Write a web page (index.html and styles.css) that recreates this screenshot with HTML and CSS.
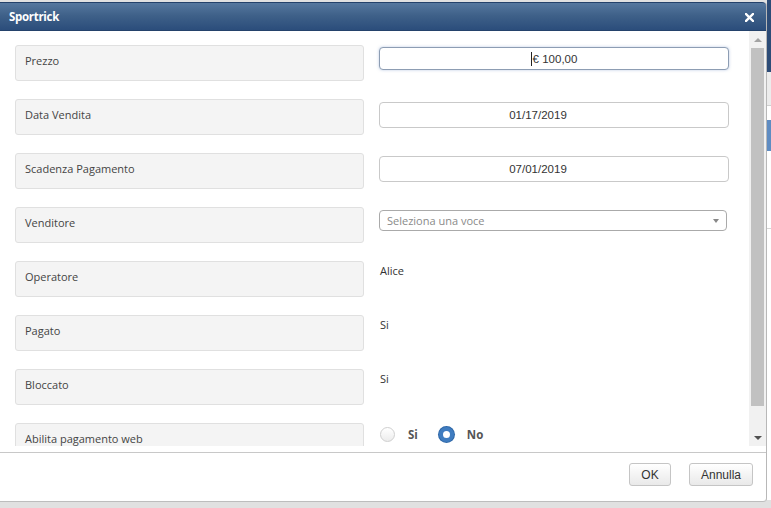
FILE: index.html
```html
<!DOCTYPE html>
<html>
<head>
  <title>Sportrick</title>
  <meta name="viewport" content="width=device-width, initial-scale=1.0">
  <link rel="stylesheet" href="styles.css">
</head>
<body>
  <div class="screen">
    <div class="dialog">
      <div class="titlebar">
        <span class="title">Sportrick</span>
        <span class="close" title="Chiudi">
          <svg width="9" height="9" viewBox="0 0 9 9"><path d="M1 1 L8 8 M8 1 L1 8" stroke="#fff" stroke-width="2.4" stroke-linecap="square"/></svg>
        </span>
      </div>

      <div class="content">
        <div class="scroll">
          <div class="form">
            <div class="row">
              <div class="label">Prezzo</div>
              <div class="field"><div class="input focused"><span class="caret"></span>€ 100,00</div></div>
            </div>
            <div class="row">
              <div class="label">Data Vendita</div>
              <div class="field"><div class="input date">01/17/2019</div></div>
            </div>
            <div class="row">
              <div class="label">Scadenza Pagamento</div>
              <div class="field"><div class="input date">07/01/2019</div></div>
            </div>
            <div class="row">
              <div class="label">Venditore</div>
              <div class="field">
                <div class="select"><span class="placeholder">Seleziona una voce</span><span class="select-arrow"></span></div>
              </div>
            </div>
            <div class="row">
              <div class="label">Operatore</div>
              <div class="field"><div class="value">Alice</div></div>
            </div>
            <div class="row">
              <div class="label">Pagato</div>
              <div class="field"><div class="value">Si</div></div>
            </div>
            <div class="row">
              <div class="label">Bloccato</div>
              <div class="field"><div class="value">Si</div></div>
            </div>
            <div class="row">
              <div class="label">Abilita pagamento web</div>
              <div class="field">
                <div class="radios">
                  <span class="radio"></span><span class="radio-text">Si</span>
                  <span class="radio checked"></span><span class="radio-text">No</span>
                </div>
              </div>
            </div>
          </div>
        </div>
        <div class="scrollbar">
          <div class="sb-arrow up"></div>
          <div class="sb-track"><div class="sb-thumb"></div></div>
          <div class="sb-arrow down"></div>
        </div>
      </div>

      <div class="footer">
        <button class="btn btn-ok">OK</button>
        <button class="btn">Annulla</button>
      </div>
    </div>
    <div class="page-edge"></div>
  </div>
</body>
</html>
```

FILE: styles.css
```css
* {
  margin: 0;
  padding: 0;
  box-sizing: border-box;
}

body {
  font-family: 'Open Sans', 'DejaVu Sans', sans-serif;
  background: #e1e1e1;
  color: #333;
  overflow: hidden;
}

.screen {
  display: flex;
  height: 508px;
}

.page-edge {
  flex: 1;
  height: 500px;
  background: linear-gradient(to bottom,
    #2d4c77 0, #2d4c77 72px,
    #ececec 72px, #ececec 105px,
    #d0d0d0 105px, #d0d0d0 106px,
    #fff 106px, #fff 120px,
    #5f8cc2 120px, #5f8cc2 151px,
    #fff 151px, #fff 228px,
    #d6d6d6 228px, #d6d6d6 229px,
    #fff 229px);
}

/* Dialog window */
.dialog {
  width: 767px;
  height: 500px;
  margin-top: 2px;
  background: #fff;
  border-right: 1px solid #b8b8b8;
  border-bottom: 1px solid #bdbdbd;
  border-radius: 0 4px 4px 0;
  display: flex;
  flex-direction: column;
}

.titlebar {
  height: 29px;
  display: flex;
  align-items: center;
  justify-content: space-between;
  padding: 0 12px 0 9px;
  background: linear-gradient(to bottom, #56789f 0%, #3f6189 45%, #2b4d7b 100%);
  border-top: 1px solid #24426b;
  border-bottom: 1px solid #24426b;
  border-radius: 0 4px 0 0;
}

.title {
  color: #fff;
  font-weight: 700;
  font-size: 11.5px;
  letter-spacing: -0.3px;
}

.close {
  display: flex;
  margin-top: 1px;
}

.content {
  display: flex;
  height: 415px;
}

.scroll {
  flex: 1;
  overflow: hidden;
}

.form {
  display: flex;
  flex-direction: column;
  gap: 18px;
  padding: 14px 0 0 15px;
}

.row {
  display: flex;
  gap: 15px;
  height: 36px;
  flex-shrink: 0;
}

.label {
  width: 349px;
  height: 36px;
  display: flex;
  align-items: center;
  padding: 0 0 6px 9px;
  background: #f4f4f4;
  border: 1px solid #e0e0e0;
  border-radius: 3px;
  font-size: 11px;
  color: #444;
}

.field {
  width: 350px;
}

.input {
  margin-top: 3px;
  height: 26px;
  display: flex;
  align-items: center;
  justify-content: center;
  border: 1px solid #c9c9c9;
  border-radius: 4px;
  background: #fff;
  font-family: 'Liberation Sans', Arial, sans-serif;
  font-size: 11.5px;
  color: #333;
}

.input.date {
  padding-right: 32px;
}

.input.focused {
  margin-top: 2px;
  height: 23px;
  border-color: #8d9db3;
  box-shadow: 0 0 3px rgba(120, 150, 200, 0.5);
}

.caret {
  width: 1px;
  height: 14px;
  background: #222;
  margin-right: 1px;
}

.select {
  margin-top: 3px;
  width: 348px;
  height: 21px;
  display: flex;
  align-items: center;
  justify-content: space-between;
  padding: 0 7px 0 7px;
  border: 1px solid #aaa;
  border-radius: 4px;
  background: #fff;
}

.placeholder {
  font-size: 11px;
  color: #8a8a8a;
}

.select-arrow {
  width: 0;
  height: 0;
  border-left: 3px solid transparent;
  border-right: 3px solid transparent;
  border-top: 4px solid #888;
  margin-top: 1px;
}

.value {
  padding: 2px 0 0 1px;
  font-size: 11px;
  color: #333;
}

.radios {
  display: flex;
  align-items: center;
  padding-top: 4px;
  padding-left: 1px;
}

.radio {
  width: 15px;
  height: 15px;
  border-radius: 50%;
  border: 1px solid #cfcfcf;
  background: linear-gradient(to bottom, #fff, #ececec);
}

.radio.checked {
  border: 4px solid #3f7cc0;
  background: #fff;
  box-shadow: 0 0 0 1px #2f68a8;
}

.radio-text {
  font-size: 11.5px;
  font-weight: 700;
  color: #555;
  margin: 0 21px 0 13px;
}

/* Fake scrollbar of the form area */
.scrollbar {
  width: 17px;
  display: flex;
  flex-direction: column;
  background: #f1f1f1;
}

.sb-arrow {
  height: 17px;
  display: flex;
  align-items: center;
  justify-content: center;
}

.sb-arrow::after {
  content: '';
  border-left: 4px solid transparent;
  border-right: 4px solid transparent;
}

.sb-arrow.up::after {
  border-bottom: 4px solid #a3a3a3;
}

.sb-arrow.down::after {
  border-top: 4px solid #505050;
}

.sb-track {
  flex: 1;
  padding: 0 2px;
}

.sb-thumb {
  height: 358px;
  background: #c1c1c1;
}

.footer {
  flex: 1;
  margin-top: 6px;
  border-top: 1px solid #c8c8c8;
  display: flex;
  justify-content: flex-end;
  align-items: flex-start;
  gap: 18px;
  padding: 10px 13px 0 0;
}

.btn {
  height: 23px;
  padding: 0 11px;
  border: 1px solid #c5c5c5;
  border-radius: 3px;
  background: linear-gradient(to bottom, #fff 0%, #f4f4f4 50%, #e9e9e9 100%);
  font-family: 'Liberation Sans', Arial, sans-serif;
  font-size: 12px;
  color: #333;
}

.btn-ok {
  width: 42px;
  padding: 0;
}
```
